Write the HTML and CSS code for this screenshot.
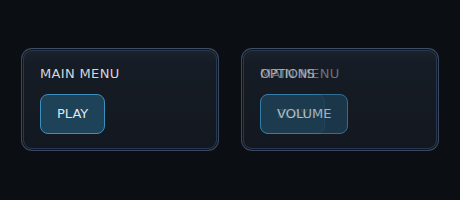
FILE: index.html
```html
<!DOCTYPE html>
<html>
<head>
<meta charset="utf-8">
<link rel="stylesheet" href="styles.css">
</head>
<body>
<div class="stage">
  <section class="panel">
    <div class="content">
      <div class="title">MAIN MENU</div>
      <div class="btn">PLAY</div>
    </div>
  </section>
  <section class="panel">
    <div class="content outgoing">
      <div class="title">MAIN MENU</div>
      <div class="btn">PLAY</div>
    </div>
    <div class="content incoming">
      <div class="title tight">OPTIONS</div>
      <div class="btn">VOLUME</div>
    </div>
  </section>
</div>
</body>
</html>
```
FILE: styles.css
```css
html, body {
  margin: 0;
  padding: 0;
  background: #0b0e13;
  width: 460px;
  height: 200px;
  overflow: hidden;
  font-family: "DejaVu Sans", sans-serif;
}
.stage {
  display: flex;
  gap: 22px;
  padding: 48px 0 0 21px;
}
.panel {
  position: relative;
  box-sizing: border-box;
  width: 198px;
  height: 103px;
  border: 1px solid #394860;
  border-top-color: #414e63;
  border-radius: 11px;
  background: linear-gradient(#1d232d 0px, #161c25 14px, #131820 100%);
  box-shadow: inset 0 0 0 1px #10151c, inset 0 0 0 2px #293850;
}
.content {
  padding: 17px 18px 0;
  display: flex;
  flex-direction: column;
  align-items: flex-start;
  gap: 12px;
}
.title {
  font-size: 13px;
  line-height: 16px;
  color: #d2d6dd;
  letter-spacing: 0.35px;
}
.title.tight {
  letter-spacing: -0.5px;
}
.btn {
  box-sizing: border-box;
  height: 40px;
  padding: 11px 16px;
  font-size: 13px;
  line-height: 16px;
  color: #dde6ee;
  background: #1e4257;
  border: 1px solid #3b90c0;
  border-radius: 8px;
}
.outgoing {
  position: absolute;
  left: 0;
  top: 0;
  opacity: 0.45;
}
.incoming {
  opacity: 0.72;
}
```
